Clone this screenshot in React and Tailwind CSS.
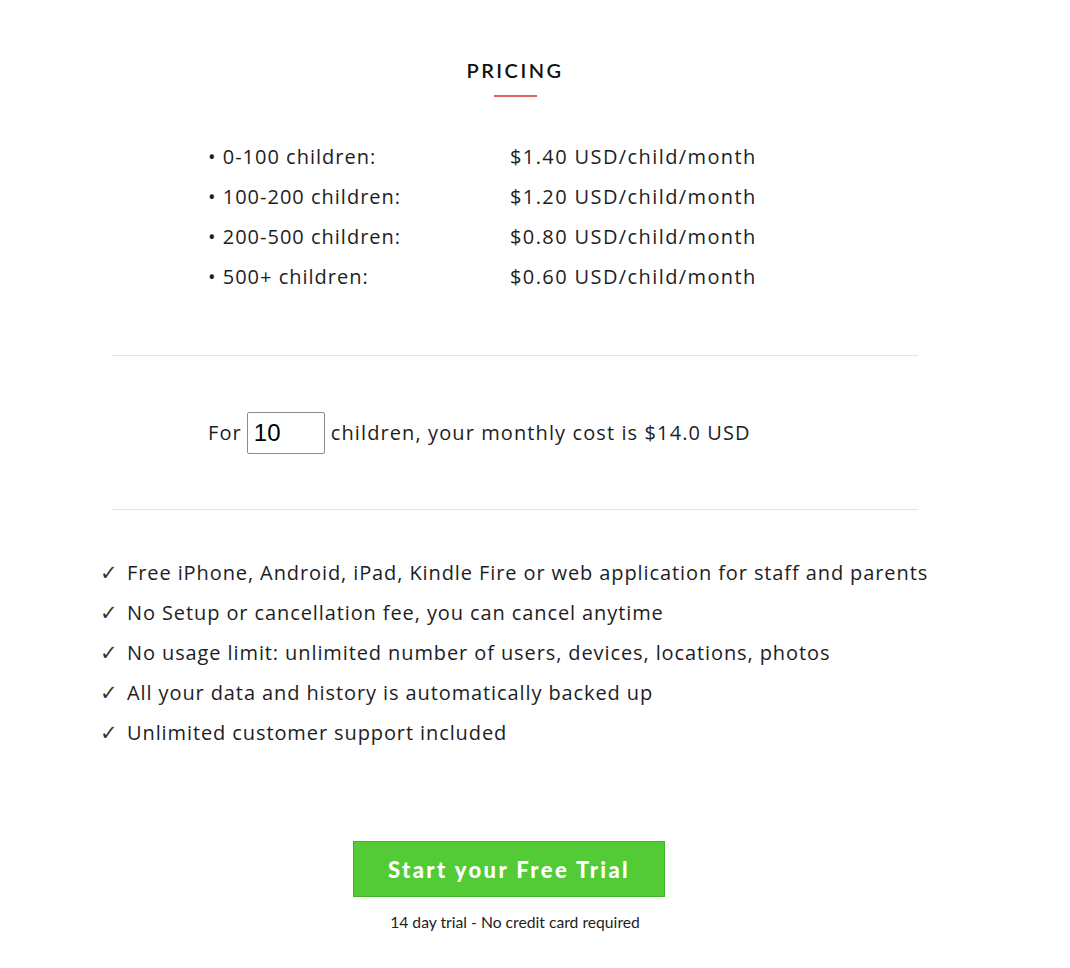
import { useState } from "react";

const tiers = [
  { range: "0-100 children:", price: "$1.40 USD/child/month" },
  { range: "100-200 children:", price: "$1.20 USD/child/month" },
  { range: "200-500 children:", price: "$0.80 USD/child/month" },
  { range: "500+ children:", price: "$0.60 USD/child/month" },
];

const perks = [
  "Free iPhone, Android, iPad, Kindle Fire or web application for staff and parents",
  "No Setup or cancellation fee, you can cancel anytime",
  "No usage limit: unlimited number of users, devices, locations, photos",
  "All your data and history is automatically backed up",
  "Unlimited customer support included",
];

function rate(n) {
  if (n >= 500) return 0.6;
  if (n >= 200) return 0.8;
  if (n >= 100) return 1.2;
  return 1.4;
}

export default function App() {
  const [count, setCount] = useState("10");
  const n = parseInt(count, 10) || 0;
  const cost = (n * rate(n)).toFixed(1);

  return (
    <div className="min-h-screen bg-white text-[#1d1d1f] font-['Open_Sans',sans-serif]">
      <div className="w-[1030px] pt-[58px]">
        {/* Title */}
        <div className="flex flex-col items-center">
          <h2 className="text-[20px] leading-[24px] tracking-[2.5px] font-semibold font-['Lato',sans-serif] text-[#111]">
            PRICING
          </h2>
          <div className="mt-[13px] h-[2px] w-[43px] bg-[#e06464]" />
        </div>

        {/* Tiers */}
        <div className="mt-[40px] pl-[208px] flex flex-col">
          {tiers.map((t) => (
            <div key={t.range} className="flex h-[40px] items-center text-[20px] tracking-[1px]">
              <span className="w-[302px]">• {t.range}</span>
              <span className="tracking-[1.4px]">{t.price}</span>
            </div>
          ))}
        </div>

        <div className="mx-auto mt-[58px] w-[806px] border-t border-[#e3e3e3]" />

        {/* Calculator */}
        <div className="h-[153px] pl-[208px] flex items-center text-[20px] tracking-[1.1px]">
          <span>For</span>
          <input
            value={count}
            onChange={(e) => setCount(e.target.value)}
            className="ml-[5px] mr-[6px] h-[42px] w-[78px] rounded-[2px] border border-[#8a8a8a] px-[6px] text-[24px] tracking-normal font-['Liberation_Sans',sans-serif] text-black outline-none"
          />
          <span>children, your monthly cost is ${cost} USD</span>
        </div>

        <div className="mx-auto w-[806px] border-t border-[#e3e3e3]" />

        {/* Perks */}
        <ul className="mt-[43px] pl-[100px] flex flex-col">
          {perks.map((p) => (
            <li key={p} className="flex h-[40px] items-center text-[20px] tracking-[0.9px]">
              <span className="w-[27px] text-[21px] leading-none tracking-normal font-['DejaVu_Sans',sans-serif] font-extralight text-[#333]">✓</span>
              <span>{p}</span>
            </li>
          ))}
        </ul>

        {/* CTA */}
        <div className="mt-[88px] flex flex-col items-center">
          <button className="mr-[12px] h-[56px] w-[312px] border border-[#3fb52b] bg-[#52cb36] text-white text-[22px] font-black tracking-[2.4px] font-['Lato',sans-serif]">
            Start your Free Trial
          </button>
          <p className="mt-[14px] text-[15.7px] text-[#222] font-['Lato',sans-serif]">
            14 day trial - No credit card required
          </p>
        </div>
      </div>
    </div>
  );
}
